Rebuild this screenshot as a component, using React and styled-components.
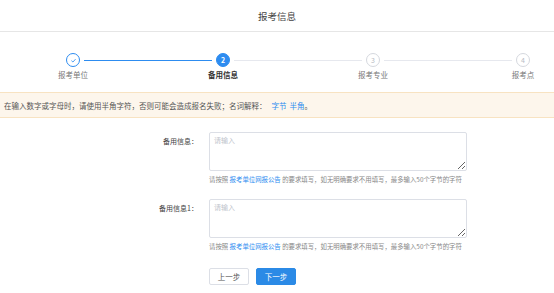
import React from 'react'
import styled, { createGlobalStyle } from 'styled-components'

const GlobalStyle = createGlobalStyle`
  body {
    margin: 0;
    background: #fff;
    font-family: "Noto Sans CJK SC", "Noto Sans", sans-serif;
    color: #333;
  }
`

const Page = styled.div`
  width: 554px;
  height: 293px;
  overflow: hidden;
`

const Header = styled.div`
  height: 31px;
  border-bottom: 1px solid #e6e6e6;
  display: flex;
  align-items: center;
  justify-content: center;
  font-size: 9.5px;
  color: #444;
`

const Steps = styled.div`
  display: flex;
  padding: 21px 11px 0 53px;
  height: 39px;
`

const Step = styled.div`
  width: 40px;
  display: flex;
  flex-direction: column;
  align-items: center;
  flex-shrink: 0;
`

const Circle = styled.div`
  width: 14px;
  height: 14px;
  box-sizing: border-box;
  border-radius: 50%;
  display: flex;
  align-items: center;
  justify-content: center;
  font-size: 7px;
  border: 1px solid ${p => (p.$state === 'todo' ? '#d5d8de' : '#2d8cf0')};
  background: ${p => (p.$state === 'active' ? '#2d8cf0' : '#fff')};
  color: ${p =>
    p.$state === 'active' ? '#fff' : p.$state === 'done' ? '#2d8cf0' : '#b8bcc4'};
  font-weight: ${p => (p.$state === 'active' ? 700 : 400)};
`

const StepLabel = styled.div`
  margin-top: 2px;
  font-size: 7.5px;
  line-height: 12px;
  white-space: nowrap;
  color: ${p => (p.$active ? '#333' : '#777')};
  font-weight: ${p => (p.$active ? 700 : 400)};
`

const Connector = styled.div`
  flex: 1;
  height: 1px;
  margin: 6.5px -9px 0;
  background: ${p => (p.$done ? '#2d8cf0' : '#e6e8ee')};
`

const Alert = styled.div`
  height: 24px;
  background: #fdf6ec;
  border-top: 1px solid #f8e3c2;
  border-bottom: 1px solid #f8e3c2;
  display: flex;
  align-items: center;
  padding-left: 4px;
  font-size: 7.5px;
  color: #555;
`

const Link = styled.a`
  color: #2d8cf0;
  text-decoration: none;
  margin-left: ${p => p.$ml || 0}px;
`

const Form = styled.div`
  padding-top: 14px;
  display: flex;
  flex-direction: column;
  gap: 13px;
`

const Row = styled.div`
  display: grid;
  grid-template-columns: 209px 258px;
`

const Label = styled.div`
  text-align: right;
  padding-right: 11px;
  padding-top: 4px;
  font-size: 7px;
  line-height: 11px;
  color: #444;
`

const Field = styled.div`
  display: flex;
  flex-direction: column;
`

const TextArea = styled.textarea`
  box-sizing: border-box;
  width: 258px;
  height: 39px;
  border: 1px solid #dcdfe6;
  border-radius: 2px;
  padding: 2px 4px;
  font-family: inherit;
  font-size: 7px;
  line-height: 11px;
  color: #333;
  resize: vertical;
  outline: none;

  &::placeholder {
    color: #c0c4cc;
  }
`

const Hint = styled.div`
  margin-top: 3px;
  font-size: 6.4px;
  line-height: 12px;
  color: #888;
  white-space: nowrap;
`

const Buttons = styled.div`
  display: flex;
  gap: 7px;
  padding-left: 209px;
  margin-top: 2px;
`

const Button = styled.button`
  width: 40px;
  height: 17px;
  box-sizing: border-box;
  border-radius: 2px;
  font-family: inherit;
  font-size: 7.5px;
  padding: 0;
  cursor: pointer;
  border: 1px solid ${p => (p.$primary ? '#2b8ae6' : '#dcdfe6')};
  background: ${p => (p.$primary ? '#2b8ae6' : '#fff')};
  color: ${p => (p.$primary ? '#fff' : '#555')};
`

const steps = [
  { n: 1, label: '报考单位', state: 'done' },
  { n: 2, label: '备用信息', state: 'active' },
  { n: 3, label: '报考专业', state: 'todo' },
  { n: 4, label: '报考点', state: 'todo' }
]

const Check = () => (
  <svg width="7" height="7" viewBox="0 0 10 10">
    <path d="M2 5.2 L4.2 7.2 L8 3" fill="none" stroke="#2d8cf0" strokeWidth="1.2" />
  </svg>
)

const FormRow = ({ label }) => (
  <Row>
    <Label>{label}</Label>
    <Field>
      <TextArea placeholder="请输入" />
      <Hint>
        请按照 <Link href="#">报考单位网报公告</Link> 的要求填写，如无明确要求不用填写，最多输入50个字节的字符
      </Hint>
    </Field>
  </Row>
)

export default function App() {
  return (
    <Page>
      <GlobalStyle />
      <Header>报考信息</Header>
      <Steps>
        {steps.map((s, i) => (
          <React.Fragment key={s.n}>
            {i > 0 && <Connector $done={steps[i - 1].state === 'done'} />}
            <Step>
              <Circle $state={s.state}>{s.state === 'done' ? <Check /> : s.n}</Circle>
              <StepLabel $active={s.state === 'active'}>{s.label}</StepLabel>
            </Step>
          </React.Fragment>
        ))}
      </Steps>
      <Alert>
        在输入数字或字母时，请使用半角字符，否则可能会造成报名失败；名词解释：
        <Link href="#" $ml={5}>字节</Link>
        <Link href="#" $ml={3}>半角</Link>。
      </Alert>
      <Form>
        <FormRow label="备用信息：" />
        <FormRow label="备用信息1：" />
        <Buttons>
          <Button>上一步</Button>
          <Button $primary>下一步</Button>
        </Buttons>
      </Form>
    </Page>
  )
}
